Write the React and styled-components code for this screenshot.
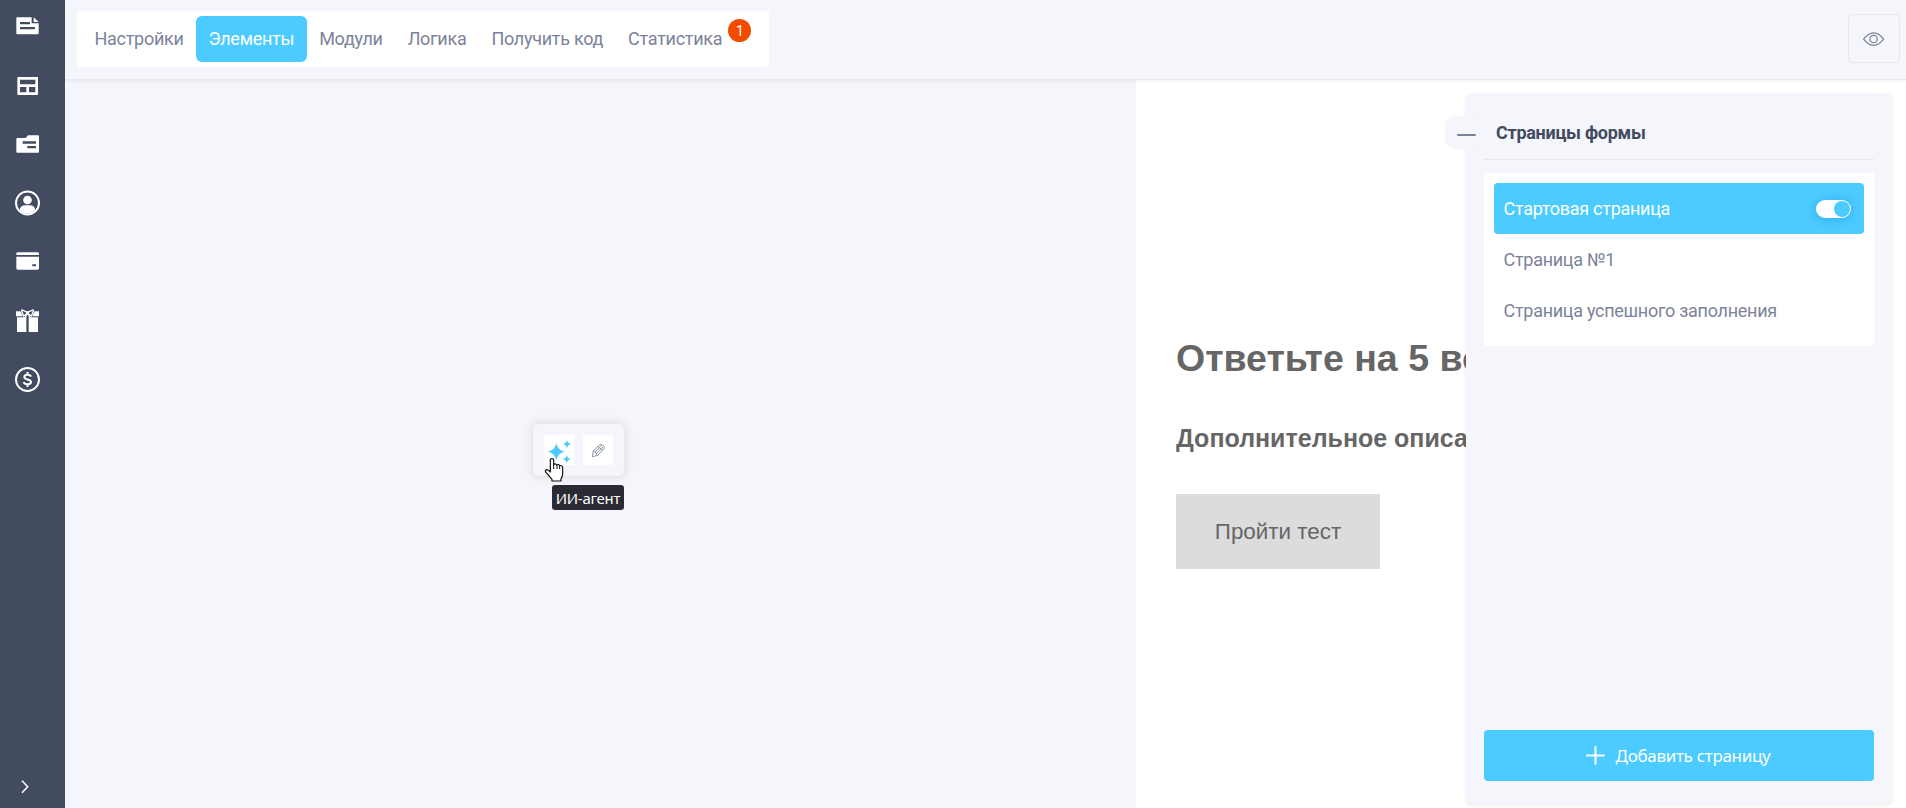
import React from 'react';
import styled, { createGlobalStyle, css } from 'styled-components';

const COLORS = {
  accent: '#4bcbff',
  background: '#f5f6fb',
  border: '#e7e8ed',
  dark: '#434b60',
  text: '#7b839a',
  form: '#666666',
  badge: '#f04b00',
};

const GlobalStyle = createGlobalStyle`
  * {
    box-sizing: border-box;
  }

  body {
    margin: 0;
    background: ${COLORS.background};
    font-family: Roboto, sans-serif;
    font-size: 18px;
    letter-spacing: -0.28px;
    overflow: hidden;
  }

  button {
    border: 0;
    padding: 0;
    font: inherit;
  }
`;

const Page = styled.div`
  display: flex;
  width: 100%;
  height: 100vh;
`;

const Sidebar = styled.nav`
  display: flex;
  flex-direction: column;
  flex: 0 0 65px;
  gap: 35px;
  padding: 14px 15px 9px;
  background: ${COLORS.dark};
`;

const SidebarIcon = styled.svg`
  display: block;
  flex: none;
  width: 24px;
  height: 24px;
  overflow: visible;
  fill: #fff;
`;

const ExpandIcon = styled(SidebarIcon)`
  margin-top: auto;
  fill: none;
  stroke: #fff;
  stroke-width: 4.5;
`;

const Main = styled.div`
  display: flex;
  flex: 1;
  flex-direction: column;
  min-width: 0;
`;

const Header = styled.header`
  display: flex;
  flex: 0 0 80px;
  align-items: flex-start;
  justify-content: space-between;
  padding: 11px 6px 0 12px;
  border-bottom: 1px solid ${COLORS.border};
  box-shadow: 0 1px 3px rgba(0, 0, 0, 0.07);
  z-index: 1;
`;

const Menu = styled.div`
  display: flex;
  width: 692px;
  height: 56px;
  padding: 5px;
  border-radius: 3px;
  background: #fff;
`;

const MenuItem = styled.a`
  display: flex;
  align-items: center;
  height: 46px;
  padding: 0 12.5px 1px;
  border-radius: 6px;
  color: ${COLORS.text};
  white-space: nowrap;

  ${({ $active }) => $active && css`
    background: ${COLORS.accent};
    color: #fff;
  `}
`;

const Badge = styled.span`
  align-self: flex-start;
  width: 23px;
  height: 23px;
  margin: 3px 0 0 6px;
  border-radius: 50%;
  background: ${COLORS.badge};
  color: #fff;
  font-size: 14px;
  line-height: 24px;
  text-align: center;
`;

const PreviewButton = styled.button`
  display: flex;
  align-items: center;
  justify-content: center;
  width: 52px;
  height: 49px;
  margin-top: 3px;
  border: 1px solid ${COLORS.border};
  border-radius: 4px;
  background: none;
`;

const Workspace = styled.main`
  display: flex;
  flex: 1;
  min-height: 0;
`;

const Canvas = styled.section`
  position: relative;
  flex: 0 0 1071px;
`;

// Floating controls of the selected element
const FloatingTools = styled.div`
  position: absolute;
  top: 344px;
  left: 468px;
  display: flex;
  gap: 9px;
  width: 91px;
  height: 52px;
  padding: 11px;
  border-radius: 6px;
  background: ${COLORS.background};
  box-shadow: 0 0 8px 2px rgba(0, 0, 0, 0.09);
`;

const Tool = styled.button`
  width: 30px;
  height: 30px;
  background: #fff;

  svg {
    display: block;
  }
`;

const Tooltip = styled.div`
  position: absolute;
  top: 405px;
  left: 487px;
  width: 72px;
  height: 25px;
  border-radius: 3px;
  background: #2a2a35;
  color: #fff;
  font-family: 'Noto Sans', sans-serif;
  font-size: 15px;
  line-height: 26px;
  text-align: center;
  white-space: nowrap;
`;

const Pointer = styled.svg`
  position: absolute;
  top: 378px;
  left: 480px;
  overflow: visible;
`;

const Preview = styled.section`
  display: flex;
  flex: 1;
  justify-content: flex-end;
  min-width: 0;
  padding: 13px 14px 5px 40px;
  background: #fff;
`;

const Form = styled.div`
  flex: 1;
  min-width: 0;
  padding-top: 241px;
  overflow: hidden;
  color: ${COLORS.form};
  font-family: 'Liberation Sans', Arial, sans-serif;
  letter-spacing: normal;
  white-space: nowrap;
`;

const FormTitle = styled.h1`
  margin: 0;
  font-size: 37.5px;
  line-height: 48px;
`;

const FormDescription = styled.h2`
  margin: 41px 0 0;
  font-size: 25px;
  line-height: 30px;
`;

const FormButton = styled.button`
  display: block;
  width: 204px;
  height: 75px;
  margin-top: 41px;
  background: #dcdcdc;
  color: ${COLORS.form};
  font-size: 22.4px;
`;

const PagesPanel = styled.aside`
  position: relative;
  display: flex;
  flex: 0 0 426px;
  flex-direction: column;
  padding: 0 18px 22px;
  border-radius: 6px;
  background: ${COLORS.background};
  box-shadow: 0 2px 3px 1px rgba(0, 0, 0, 0.06);
`;

const CollapseButton = styled.button`
  position: absolute;
  top: 23px;
  left: -20px;
  display: flex;
  align-items: center;
  width: 34px;
  height: 33px;
  padding-left: 11px;
  border-radius: 10px 0 0 10px;
  background: ${COLORS.background};
  box-shadow: -1px 0 1px rgba(0, 0, 0, 0.04);

  &::before {
    content: '';
    width: 19px;
    height: 2px;
    margin-top: 4px;
    border-radius: 1px;
    background: ${COLORS.text};
  }
`;

const PanelTitle = styled.h3`
  height: 67px;
  margin: 0 0 13px;
  padding-left: 12px;
  border-bottom: 1px solid ${COLORS.border};
  color: ${COLORS.dark};
  font-size: 18px;
  font-weight: 700;
  line-height: 80px;
`;

const PageList = styled.div`
  padding: 10px;
  border-radius: 3px;
  background: #fff;
`;

const PageItem = styled.div`
  display: flex;
  align-items: center;
  justify-content: space-between;
  height: 51px;
  padding: 0 13px 0 9.5px;
  border-radius: 4px;
  color: ${COLORS.text};

  ${({ $active }) => $active && css`
    background: ${COLORS.accent};
    color: #fff;
  `}
`;

const Toggle = styled.span`
  display: flex;
  justify-content: flex-end;
  width: 35px;
  height: 18px;
  padding: 1px;
  border-radius: 9px;
  background: #fff;
  box-shadow: 0 1px 9px 1px rgba(0, 130, 200, 0.35);

  &::before {
    content: '';
    width: 16px;
    height: 16px;
    border-radius: 50%;
    background: ${COLORS.accent};
  }
`;

const AddButton = styled.button`
  display: flex;
  align-items: center;
  justify-content: center;
  gap: 11px;
  height: 51px;
  margin-top: auto;
  padding: 0 2px 0 0;
  border-radius: 4px;
  background: ${COLORS.accent};
  color: #fff;
  font-family: 'Noto Sans', sans-serif;
  font-size: 17px;
  letter-spacing: -0.3px;
`;

const MENU = ['Настройки', 'Элементы', 'Модули', 'Логика', 'Получить код', 'Статистика'];

const PAGES = ['Стартовая страница', 'Страница №1', 'Страница успешного заполнения'];

const SidebarIcons = () => (
  <>
    <SidebarIcon viewBox="45 42 72 72">
      <path fillRule="evenodd" d="M52 52H95V70H116V100Q116 103 113 103H52Q49 103 49 100V55Q49 52 52 52ZM60 66V73H90V66ZM60 81V88H105V81Z" />
      <path d="M101 52L116 66H101Z" />
    </SidebarIcon>
    <SidebarIcon viewBox="45 219 72 72">
      <path fillRule="evenodd" d="M54 231H112Q114 231 114 233V282Q114 285 111 285H55Q52 285 52 282V233ZM60 239V253H106V239ZM60 261V277H79V261ZM87 261V277H106V261Z" />
    </SidebarIcon>
    <SidebarIcon viewBox="45 396 72 72">
      <path fillRule="evenodd" d="M52 414H77L84 406H114Q117 406 117 409V455Q117 458 114 458H52Q49 458 49 455V417Q49 414 52 414ZM68 424V431H108V424ZM82 438V445H108V438Z" />
    </SidebarIcon>
    <SidebarIcon viewBox="45 573 72 72">
      <circle cx="82.5" cy="609" r="34.5" fill="none" stroke="#fff" strokeWidth="6" />
      <circle cx="82.5" cy="600" r="13" />
      <path d="M59 630Q61 616 76 616H89Q104 616 106 630Q96 641 82.5 641T59 630Z" />
    </SidebarIcon>
    <SidebarIcon viewBox="45 60 72 72">
      <path d="M53 67H113Q117 67 117 71V75H49V71Q49 67 53 67Z" />
      <path fillRule="evenodd" d="M49 80H117V115Q117 119 113 119H53Q49 119 49 115ZM97 103V109H108V103Z" />
    </SidebarIcon>
    <SidebarIcon viewBox="45 237 72 72">
      <path d="M48 244H61L68 259H48ZM117 244H104L97 259H117ZM51 262H79V306H51ZM86 262H114V306H86Z" />
      <path d="M82.5 247L66 240L65 244L71 258L80 252L75 264M82.5 247L99 240L100 244L94 258L85 252L90 264" fill="none" stroke="#fff" strokeWidth="4" />
      <circle cx="82.5" cy="249" r="5" />
    </SidebarIcon>
    <SidebarIcon viewBox="45 414 72 72">
      <circle cx="82.5" cy="448.5" r="34.5" fill="none" stroke="#fff" strokeWidth="6" />
      <path d="M82.5 426V435M82.5 462V471M93 440Q91 434 82.5 434Q73 434 73 441Q73 446 82.5 448.5Q93 451 93 456Q93 463 82.5 463Q73 463 71 456" fill="none" stroke="#fff" strokeWidth="6" />
    </SidebarIcon>
    <ExpandIcon viewBox="45 105 72 72">
      <path d="M66 122L83 140L66 158" />
    </ExpandIcon>
  </>
);

const EyeIcon = () => (
  <svg width="22" height="16" viewBox="0 0 22 16" fill="none" stroke={COLORS.text} strokeWidth="1.2">
    <path d="M.6 8.200Q5 1.800 10.600 1.800T20.600 8.200Q16 14.300 10.600 14.300T.6 8.200Z" />
    <circle cx="10.600" cy="8" r="3.700" />
  </svg>
);

const SparklesIcon = () => (
  <svg width="30" height="30" viewBox="102 105 90 90" fill={COLORS.accent}>
    <path d="M139 130Q143 151 164 155Q143 159 139 181Q135 159 114 155Q135 151 139 130Z" />
    <path d="M171 119Q173 130 183 132Q173 134 171 145Q169 134 159 132Q169 130 171 119Z" />
    <path d="M170 164Q172 175 182 177Q172 179 170 190Q168 179 158 177Q168 175 170 164Z" />
  </svg>
);

const PencilIcon = () => (
  <svg width="30" height="30" viewBox="219 105 90 90" fill="none" stroke={COLORS.text} strokeWidth="2.6" strokeLinejoin="round">
    <path d="M247 170L250 153L269 134Q273 131 277 135L281 139Q285 143 281 147L263 166Z" />
    <path d="M250 153L256 155L258 161L263 166M256 155L275 136M258 161L279 141M264 139L276 151" />
  </svg>
);

const HandPointer = () => (
  <Pointer width="19" height="25" viewBox="105 174 57 75">
    <path
      d="M121 200V179Q126 172 131 179V194Q136 189 141 195Q146 191 149 197Q155 195 158 202V222Q158 230 153 236V243H126V238L107 216Q104 210 110 209Q115 209 121 216Z"
      fill="#fff"
      stroke="#111"
      strokeWidth="3.5"
      strokeLinejoin="round"
    />
    <path d="M131 192V207M141 195V207M149 198V207" stroke="#111" strokeWidth="3" />
  </Pointer>
);

const PlusIcon = () => (
  <svg width="19" height="19" viewBox="0 0 19 19" stroke="#fff" strokeWidth="2" strokeLinecap="round">
    <path d="M9.5 1V18M1 9.5H18" />
  </svg>
);

const App = () => (
  <>
    <GlobalStyle />
    <Page>
      <Sidebar>
        <SidebarIcons />
      </Sidebar>

      <Main>
        <Header>
          <Menu>
            {MENU.map((name) => (
              <MenuItem key={name} $active={name === 'Элементы'}>
                {name}
                {name === 'Статистика' && <Badge>1</Badge>}
              </MenuItem>
            ))}
          </Menu>
          <PreviewButton>
            <EyeIcon />
          </PreviewButton>
        </Header>

        <Workspace>
          <Canvas>
            <FloatingTools>
              <Tool><SparklesIcon /></Tool>
              <Tool><PencilIcon /></Tool>
            </FloatingTools>
            <Tooltip>ИИ-агент</Tooltip>
            <HandPointer />
          </Canvas>

          <Preview>
            <Form>
              <FormTitle>Ответьте на 5 вопросов</FormTitle>
              <FormDescription>Дополнительное описание</FormDescription>
              <FormButton>Пройти тест</FormButton>
            </Form>

            <PagesPanel>
              <CollapseButton />
              <PanelTitle>Страницы формы</PanelTitle>
              <PageList>
                {PAGES.map((name, index) => (
                  <PageItem key={name} $active={index === 0}>
                    {name}
                    {index === 0 && <Toggle />}
                  </PageItem>
                ))}
              </PageList>
              <AddButton>
                <PlusIcon />
                Добавить страницу
              </AddButton>
            </PagesPanel>
          </Preview>
        </Workspace>
      </Main>
    </Page>
  </>
);

export default App;
